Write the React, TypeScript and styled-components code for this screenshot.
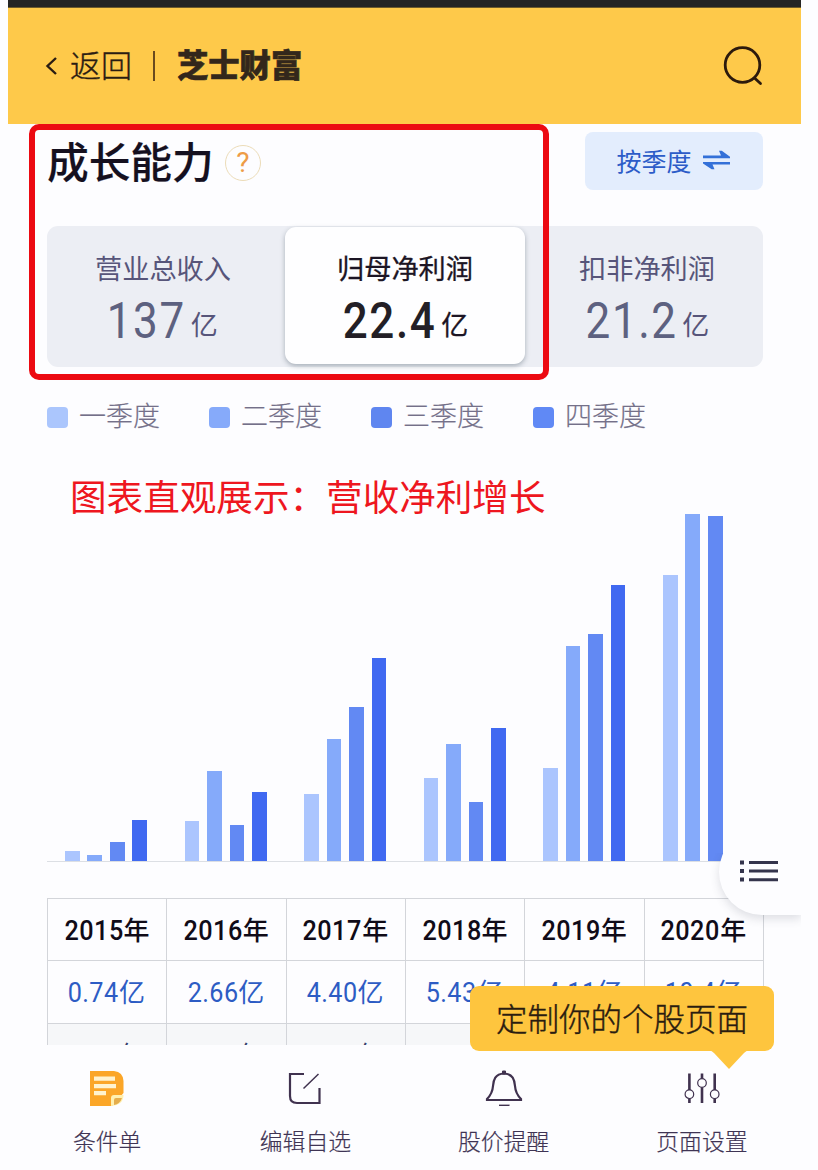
import React from "react";
import styled, { createGlobalStyle } from "styled-components";

const GlobalStyle = createGlobalStyle`
  * { box-sizing: border-box; }
  body {
    margin: 0;
    background: #fdfdff;
    font-family: "Noto Sans CJK SC", sans-serif;
    overflow: hidden;
  }
`;

const Screen = styled.div`
  position: relative;
  width: 793px;
  height: 1170px;
  margin-left: 8px;
  display: flex;
  flex-direction: column;
  background: #fdfdff;
`;

const StatusStrip = styled.div`
  height: 8px;
  flex: none;
  background: #242424;
  border-bottom: 1px solid #6d5a2c;
`;

const Header = styled.header`
  height: 116px;
  flex: none;
  display: flex;
  align-items: center;
  padding: 0 38px 0 37px;
  background: #fec94a;
  color: #2a1c12;
`;

const BackLabel = styled.span`
  margin: -5px 0 0 11px;
  font-size: 31px;
  line-height: 40px;
  font-weight: 300;
  -webkit-text-stroke: 0.4px currentColor;
`;

const Divider = styled.span`
  width: 2px;
  height: 30px;
  margin: 0 22px 0 21px;
  background: #6a4a1e;
`;

const Brand = styled.span`
  flex: 1;
  margin-top: -5px;
  font-size: 31.3px;
  line-height: 40px;
  font-weight: 900;
  -webkit-text-stroke: 0.6px currentColor;
  color: #33271b;
`;

const Content = styled.main`
  position: relative;
  height: 921px;
  flex: none;
  overflow: hidden;
  padding: 8px 38px 0 39px;
`;

const TitleRow = styled.div`
  display: flex;
  align-items: center;
  height: 58px;
`;

const Title = styled.h1`
  margin: -3px 0 0;
  font-size: 41.7px;
  line-height: 58px;
  font-weight: 500;
  -webkit-text-stroke: 0.2px currentColor;
  color: #15101f;
`;

const Help = styled.span`
  width: 36px;
  height: 36px;
  margin: 3px auto 0 11px;
  display: flex;
  align-items: center;
  justify-content: center;
  border: 1.5px solid #ecdcb8;
  border-radius: 50%;
  font: 400 28px/34px Roboto, sans-serif;
  color: #ee9c46;
`;

const PeriodButton = styled.button`
  width: 178px;
  height: 58px;
  display: flex;
  align-items: center;
  justify-content: center;
  gap: 11px;
  padding: 0 2px 3px 0;
  border: 0;
  border-radius: 8px;
  background: #e3edfd;
  color: #2c5cc8;
  font-family: inherit;
  font-size: 25px;
  line-height: 34px;
`;

const Switch = styled.div`
  display: flex;
  height: 141px;
  margin-top: 36px;
  border-radius: 11px;
  background: #eceef4;
`;

const Option = styled.div<{ $active?: boolean }>`
  flex: ${(p) => (p.$active ? "0 0 240px" : "1 1 0")};
  display: flex;
  flex-direction: column;
  align-items: center;
  margin: 1px 0 3px;
  padding-top: 22px;
  border-radius: 11px;
  background: ${(p) => (p.$active ? "#fefeff" : "transparent")};
  box-shadow: ${(p) => (p.$active ? "0 2px 5px rgba(70, 85, 100, 0.42)" : "none")};
  color: ${(p) => (p.$active ? "#1c1524" : "#57557a")};
  -webkit-text-stroke: ${(p) => (p.$active ? "0.3px" : "0")} currentColor;
`;

const OptionBody = styled.div<{ $shift: number }>`
  display: flex;
  flex-direction: column;
  align-items: center;
  margin-left: ${(p) => p.$shift}px;
`;

const OptionName = styled.div`
  font-size: 27.2px;
  line-height: 36px;
`;

const OptionValue = styled.div`
  display: flex;
  align-items: flex-start;
  height: 60px;
  margin-top: 6px;
`;

const BigNumber = styled.span<{ $active?: boolean }>`
  display: inline-block;
  margin-left: -12px;
  font: ${(p) => (p.$active ? 500 : 400)} 50px/60px Roboto, sans-serif;
  letter-spacing: 1.8px;
  transform: scaleX(0.88);
  transform-origin: right;
  -webkit-text-stroke: 0;
  color: ${(p) => (p.$active ? "#231f26" : "#5d6180")};
`;

const BigUnit = styled.span`
  margin: 9px 0 0 5px;
  font-size: 27px;
  line-height: 48px;
`;

const Legend = styled.div`
  display: flex;
  margin-top: 31px;
  height: 38px;
`;

const LegendItem = styled.div`
  display: flex;
  align-items: center;
  width: 162px;
  font-size: 27px;
  line-height: 36px;
  font-weight: 300;
  color: #747089;
  -webkit-text-stroke: 0.2px currentColor;
`;

const LegendLabel = styled.span`
  margin-top: -4px;
`;

const Swatch = styled.span<{ $color: string }>`
  width: 21px;
  height: 21px;
  margin-right: 11px;
  border-radius: 4px;
  background: ${(p) => p.$color};
`;

const Chart = styled.div`
  display: flex;
  align-items: flex-end;
  height: 426px;
  padding-left: 18px;
  border-bottom: 1px solid #dcdfe4;
`;

const YearGroup = styled.div`
  display: flex;
  align-items: flex-end;
  flex: none;
  gap: 7.9px;
  width: 119.6px;
`;

const Bar = styled.span<{ $color: string }>`
  width: 14.6px;
  background: ${(p) => p.$color};
`;

const Annotation = styled.div`
  position: absolute;
  left: 62px;
  top: 347px;
  font-size: 36.6px;
  line-height: 50px;
  color: #ee1620;
  white-space: nowrap;
`;

const Table = styled.div`
  display: grid;
  grid-template-columns: repeat(6, 1fr);
  width: 717px;
  margin-top: 36px;
  border-top: 1px solid #d3d5da;
  border-left: 1px solid #d3d5da;
`;

type CellKind = "year" | "value" | "shaded";

const cellColor = { year: "#100b18", value: "#2d5cc4", shaded: "#35406b" };

const Cell = styled.div<{ $kind: CellKind }>`
  display: flex;
  align-items: baseline;
  justify-content: center;
  height: 62.3px;
  padding-right: 1px;
  border-right: 1px solid #d3d5da;
  border-bottom: 1px solid #d3d5da;
  background: ${(p) => (p.$kind === "shaded" ? "#f6f7f9" : "transparent")};
  color: ${(p) => cellColor[p.$kind]};
  font-size: 26px;
  font-weight: ${(p) => (p.$kind === "year" ? 500 : 400)};
  line-height: 60px;
`;

const CellNumber = styled.span`
  display: inline-block;
  margin-left: -6px;
  font-family: Roboto, sans-serif;
  font-size: 28px;
  letter-spacing: 0.5px;
  transform: scaleX(0.9);
  transform-origin: right;
`;

const MenuTab = styled.div`
  position: absolute;
  left: 711px;
  top: 705px;
  width: 82px;
  height: 86px;
  padding: 30px 0 0 21px;
  border-radius: 43px 0 0 43px;
  background: #fdfdff;
  box-shadow: 0 4px 10px rgba(60, 70, 90, 0.16);
  clip-path: inset(24px 0 -24px -24px);
`;

const RedFrame = styled.div`
  position: absolute;
  left: 21px;
  top: 124px;
  width: 520px;
  height: 256px;
  border: 6px solid #ec0a12;
  border-radius: 10px;
`;

const Tooltip = styled.div`
  position: absolute;
  left: 462px;
  top: 986px;
  width: 304px;
  height: 65px;
  border-radius: 9px;
  background: #fec53e;
  color: #2a1c10;
  font-size: 31.5px;
  font-weight: 300;
  line-height: 62px;
  text-align: center;
  -webkit-text-stroke: 0.4px currentColor;
`;

const TooltipArrow = styled.svg`
  position: absolute;
  left: 239px;
  top: 64px;
`;

const TabBar = styled.nav`
  display: flex;
  height: 125px;
  background: #fdfdff;
`;

const Tab = styled.div`
  flex: 1;
  display: flex;
  flex-direction: column;
  align-items: center;
  padding-top: 23px;
  color: #3f3454;
  font-size: 22.8px;
  font-weight: 300;
  line-height: 34px;
  -webkit-text-stroke: 0.2px currentColor;
`;

const TabIcon = styled.svg`
  width: 40px;
  height: 40px;
  margin-bottom: 16px;
`;

const quarterColors = ["#abc5fe", "#85aafa", "#6289f3", "#4069f1"];
const legendColors = ["#abc6fd", "#86aafa", "#5f86f0", "#6089f5"];
const quarters = ["一季度", "二季度", "三季度", "四季度"];

const barHeights = [
  [10.5, 6, 19, 41.5],
  [40.5, 90.5, 36.3, 68.7],
  [67, 122.5, 154.5, 203.5],
  [83, 117, 59, 133],
  [93, 215, 227, 276.5],
  [286.5, 347, 345],
];

const years = ["2015", "2016", "2017", "2018", "2019", "2020"];
const firstRow = ["0.74", "2.66", "4.40", "5.43", "4.11", "10.4"];
const secondRow = ["1.40", "2.34", "3.37", "7.14", "8.22", "12.1"];

const metrics = [
  { name: "营业总收入", value: "137", active: false, shift: -6 },
  { name: "归母净利润", value: "22.4", active: true, shift: 0 },
  { name: "扣非净利润", value: "21.2", active: false, shift: 6 },
];

function TableRow({ values, unit, kind }: { values: string[]; unit: string; kind: CellKind }) {
  return (
    <>
      {values.map((v) => (
        <Cell key={v} $kind={kind}>
          <CellNumber>{v}</CellNumber>
          {unit}
        </Cell>
      ))}
    </>
  );
}

export default function App() {
  return (
    <>
      <GlobalStyle />
      <Screen>
        <StatusStrip />
        <Header>
          <svg width="14" height="20" viewBox="0 0 14 20" fill="none" stroke="#2a1c12" strokeWidth="2.4">
            <path d="M11 2 2.5 10 11 18" />
          </svg>
          <BackLabel>返回</BackLabel>
          <Divider />
          <Brand>芝士财富</Brand>
          <svg width="40" height="42" viewBox="0 0 40 42" fill="none" stroke="#2c1a0c" strokeWidth="2.8" strokeLinecap="round">
            <circle cx="19.5" cy="20" r="17.3" />
            <path d="m31.5 33 6 5.6" />
          </svg>
        </Header>

        <Content>
          <TitleRow>
            <Title>成长能力</Title>
            <Help>?</Help>
            <PeriodButton>
              按季度
              <svg width="27" height="20" viewBox="0 0 27 20" fill="#3370d8">
                <path d="M0 5.600h18L16 0.800h2.800L27 6.800v1.400H0zM27 14.600H9.500l2 4.600H8.700L0 13.400V12h27z" />
              </svg>
            </PeriodButton>
          </TitleRow>

          <Switch>
            {metrics.map((m) => (
              <Option key={m.name} $active={m.active}>
                <OptionBody $shift={m.shift}>
                  <OptionName>{m.name}</OptionName>
                  <OptionValue>
                    <BigNumber $active={m.active}>{m.value}</BigNumber>
                    <BigUnit>亿</BigUnit>
                  </OptionValue>
                </OptionBody>
              </Option>
            ))}
          </Switch>

          <Legend>
            {quarters.map((q, i) => (
              <LegendItem key={q}>
                <Swatch $color={legendColors[i]} />
                <LegendLabel>{q}</LegendLabel>
              </LegendItem>
            ))}
          </Legend>

          <Chart>
            {barHeights.map((group, g) => (
              <YearGroup key={years[g]}>
                {group.map((h, i) => (
                  <Bar key={i} $color={quarterColors[i]} style={{ height: h }} />
                ))}
              </YearGroup>
            ))}
          </Chart>
          <Annotation>图表直观展示：营收净利增长</Annotation>

          <Table>
            <TableRow values={years} unit="年" kind="year" />
            <TableRow values={firstRow} unit="亿" kind="value" />
            <TableRow values={secondRow} unit="亿" kind="shaded" />
          </Table>

          <MenuTab>
            <svg width="38" height="24" viewBox="0 0 38 24" fill="#34344c">
              <path d="M0 1.500h4v4H0zM0 10h4v4H0zM0 18.500h4v4H0zM9 2h29v3H9zM9 10.600h29v3H9zM9 19.200h29v3H9z" />
            </svg>
          </MenuTab>
        </Content>

        <TabBar>
          <Tab>
            <TabIcon viewBox="0 0 40 40">
              <path d="M3 3h24q9 1 9.500 10v12L25 38H3z" fill="#fba628" />
              <path d="M7 8.500h21v4.300H7zM7 16h22v4.300H7zM7 23h12v4.300H7z" fill="#fff3cf" />
              <path d="M24 38v-8q0-3 3-3h9.500q0 10-12.500 11z" fill="#fff0b0" />
              <path d="M27 37v-5q0-2 2-2h6q-2 6-8 7z" fill="#e5ad4c" />
            </TabIcon>
            条件单
          </Tab>
          <Tab>
            <TabIcon viewBox="0 0 40 40" fill="none" stroke="#40324f">
              <path d="M19 6H5v22q0 7 7 7h22.500V20" strokeWidth="2.200" />
              <path d="M18.500 20.500 33.500 6" strokeWidth="1.500" />
            </TabIcon>
            编辑自选
          </Tab>
          <Tab>
            <TabIcon viewBox="0 0 40 40" fill="none" stroke="#40324f">
              <path d="M20 5.500C11 6 9.500 12 9 18c-.4 6-2 9-6 13v1h34v-1c-4-4-5.600-7-6-13-.5-6-2-12-11-12.500z" strokeWidth="2.200" />
              <path d="M18.500 3h3v3h-3z" fill="#40324f" strokeWidth="1" />
              <path d="M15 37.300h10.500" strokeWidth="1.400" />
            </TabIcon>
            股价提醒
          </Tab>
          <Tab>
            <TabIcon viewBox="0 0 40 40" fill="none" stroke="#40324f">
              <path d="M7.400 5.500V22M7.400 30.500v4.500M20 5.500v5M20 19.500V35M32.700 5.500V22M32.700 30.500v4.500" strokeWidth="2.600" />
              <g strokeWidth="1.200">
                <circle cx="7.400" cy="26.200" r="4.300" />
                <circle cx="20" cy="15" r="4.300" />
                <circle cx="32.700" cy="26.200" r="4.300" />
              </g>
            </TabIcon>
            页面设置
          </Tab>
        </TabBar>

        <RedFrame />
        <Tooltip>
          定制你的个股页面
          <TooltipArrow width="40" height="20" viewBox="0 0 40 20">
            <path d="M0 0q3 1 5 3l15 16L35 3q2-2 5-3z" fill="#fec53e" />
          </TooltipArrow>
        </Tooltip>
      </Screen>
    </>
  );
}
